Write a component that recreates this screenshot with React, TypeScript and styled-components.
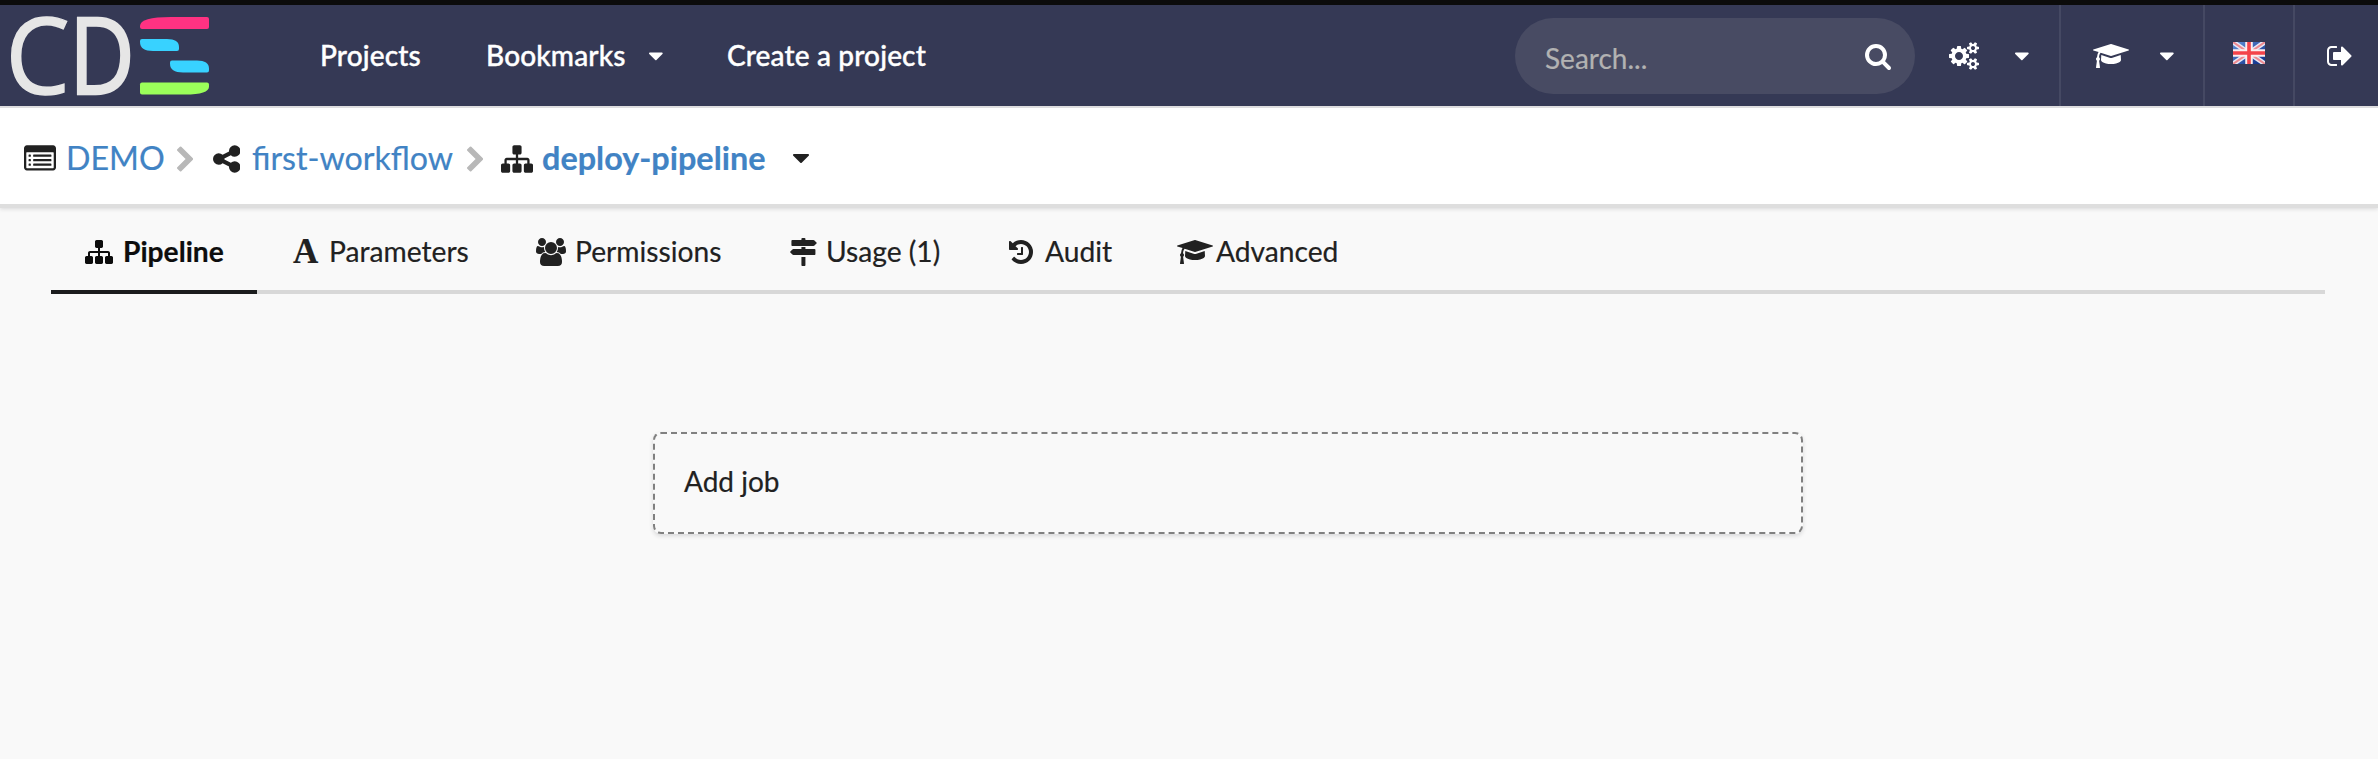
import React from "react";
import styled, { createGlobalStyle } from "styled-components";

const GlobalStyle = createGlobalStyle`
  * { box-sizing: border-box; }
  html, body { margin: 0; padding: 0; }
  body {
    background: #f9f9f9;
    color: #212121;
    font-family: Lato, "Liberation Sans", sans-serif;
    font-size: 28px;
  }
`;

const icons = {
  caret: { box: "0 0 1024 1792", d: "M1024 704q0 26-19 45l-448 448q-19 19-45 19t-45-19l-448-448q-19-19-19-45t19-45 45-19h896q26 0 45 19t19 45z" },
  search: { box: "64 0 1664 1792", d: "M1216 832q0-185-131.5-316.5t-316.5-131.5-316.5 131.5-131.5 316.5 131.5 316.5 316.5 131.5 316.5-131.5 131.5-316.5zm512 832q0 52-38 90t-90 38q-54 0-90-38l-343-342q-179 124-399 124-143 0-273.5-55.5t-225-150-150-225-55.5-273.5 55.5-273.5 150-225 225-150 273.5-55.5 273.5 55.5 225 150 150 225 55.5 273.5q0 220-124 399l343 343q37 37 37 90z" },
  share: { box: "128 0 1536 1792", d: "M1344 1024q133 0 226.5 93.5t93.5 226.5-93.5 226.5-226.5 93.5-226.5-93.5-93.5-226.5q0-12 2-34l-360-180q-92 86-218 86-133 0-226.5-93.5t-93.5-226.5 93.5-226.5 226.5-93.5q126 0 218 86l360-180q-2-22-2-34 0-133 93.5-226.5t226.5-93.5 226.5 93.5 93.5 226.5-93.5 226.5-226.5 93.5q-126 0-218-86l-360 180q2 22 2 34t-2 34l360 180q92-86 218-86z" },
  chevron: { box: "346 0 1037 1792", d: "M1363 877l-742 742q-19 19-45 19t-45-19l-166-166q-19-19-19-45t19-45l531-531-531-531q-19-19-19-45t19-45l166-166q19-19 45-19t45 19l742 742q19 19 19 45t-19 45z" },
  sitemap: { box: "0 0 1792 1792", d: "M1792 1248v320q0 40-28 68t-68 28h-320q-40 0-68-28t-28-68v-320q0-40 28-68t68-28h96v-192h-512v192h96q40 0 68 28t28 68v320q0 40-28 68t-68 28h-320q-40 0-68-28t-28-68v-320q0-40 28-68t68-28h96v-192h-512v192h96q40 0 68 28t28 68v320q0 40-28 68t-68 28h-320q-40 0-68-28t-28-68v-320q0-40 28-68t68-28h96v-192q0-52 38-90t90-38h512v-192h-96q-40 0-68-28t-28-68v-320q0-40 28-68t68-28h320q40 0 68 28t28 68v320q0 40-28 68t-68 28h-96v192h512q52 0 90 38t38 90v192h96q40 0 68 28t28 68z" },
  list: { box: "0 0 1792 1792", d: "M160 128h1472q66 0 113 47t47 113v1088q0 66-47 113t-113 47h-1472q-66 0-113-47t-47-113v-1088q0-66 47-113t113-47zm0 384q-32 0-32 32v832q0 32 32 32h1472q32 0 32-32v-832q0-32-32-32zM288 640h64q32 0 32 32v64q0 32-32 32h-64q-32 0-32-32v-64q0-32 32-32zm0 256h64q32 0 32 32v64q0 32-32 32h-64q-32 0-32-32v-64q0-32 32-32zm0 256h64q32 0 32 32v64q0 32-32 32h-64q-32 0-32-32v-64q0-32 32-32zM544 640h960q32 0 32 32v64q0 32-32 32h-960q-32 0-32-32v-64q0-32 32-32zm0 256h960q32 0 32 32v64q0 32-32 32h-960q-32 0-32-32v-64q0-32 32-32zm0 256h960q32 0 32 32v64q0 32-32 32h-960q-32 0-32-32v-64q0-32 32-32z" },
  history: { box: "128 0 1536 1792", d: "M1664 896q0 156-61 298t-164 245-245 164-298 61q-172 0-327-72.5t-264-204.5q-7-10-6.5-22.5t8.5-20.5l137-138q10-9 25-9 16 2 23 12 73 95 179 147t225 52q104 0 198.5-40.5t163.5-109.5 109.5-163.5 40.5-198.5-40.5-198.5-109.5-163.5-163.5-109.5-198.5-40.5q-98 0-188 35.5t-160 101.5l137 138q31 30 14 69-17 40-59 40h-448q-26 0-45-19t-19-45v-448q0-42 40-59 39-17 69 14l130 129q107-101 244.5-156.5t284.5-55.5q156 0 298 61t245 164 164 245 61 298zm-640-288v448q0 14-9 23t-23 9h-320q-14 0-23-9t-9-23v-64q0-14 9-23t23-9h224v-352q0-14 9-23t23-9h64q14 0 23 9t9 23z" },
  cap: { box: "0 0 2304 1792", d: "M1774 836l18 316q4 69-82 128t-235 93.5-323 34.5-323-34.5-235-93.5-82-128l18-316 574 181q22 7 48 7t48-7zm530-324q0 23-22 31l-1120 352q-4 1-10 1t-10-1l-652-206q-43 34-71 111.5t-34 178.5q63 36 63 109 0 69-58 107l58 433q2 14-8 25-9 11-24 11h-192q-15 0-24-11-10-11-8-25l58-433q-58-38-58-107 0-73 65-111 11-207 98-330l-333-104q-22-8-22-31t22-31l1120-352q4-1 10-1t10 1l1120 352q22 8 22 31z" },
  cogs: { box: "-64 0 1920 1792", d: "M832 896q0-106-75-181t-181-75-181 75-75 181 75 181 181 75 181-75 75-181zm768 512q0-52-38-90t-90-38-90 38-38 90q0 53 37.5 90.5t90.5 37.5 90.5-37.5 37.5-90.5zm0-1024q0-52-38-90t-90-38-90 38-38 90q0 53 37.5 90.5t90.5 37.5 90.5-37.5 37.5-90.5zm-384 421v185q0 10-7 19.5t-16 10.5l-155 24q-11 35-32 76 34 48 90 115 7 11 7 20 0 12-7 19-23 30-82.5 89.5t-78.5 59.5q-11 0-21-7l-115-90q-37 19-77 31-11 108-23 155-7 24-30 24h-186q-11 0-20-7.5t-10-17.5l-23-153q-34-10-75-31l-118 89q-7 7-20 7-11 0-21-8-144-133-144-160 0-9 7-19 10-14 41-53t47-61q-23-44-35-82l-152-24q-10-1-17-9.5t-7-19.5v-185q0-10 7-19.5t16-10.5l155-24q11-35 32-76-34-48-90-115-7-11-7-20 0-12 7-20 22-30 82-89t79-59q11 0 21 7l115 90q34-18 77-32 11-108 23-154 7-24 30-24h186q11 0 20 7.5t10 17.5l23 153q34 10 75 31l118-89q8-7 20-7 11 0 21 8 144 133 144 160 0 8-7 19-12 16-42 54t-45 60q23 48 34 82l152 23q10 2 17 10.5t7 19.5zm640 533v140q0 16-149 31-12 27-30 52 51 113 51 138 0 4-4 7-122 71-124 71-8 0-46-47t-52-68q-20 2-30 2t-30-2q-14 21-52 68t-46 47q-2 0-124-71-4-3-4-7 0-25 51-138-18-25-30-52-149-15-149-31v-140q0-16 149-31 13-29 30-52-51-113-51-138 0-4 4-7 4-2 35-20t59-34 30-16q8 0 46 46.5t52 67.5q20-2 30-2t30 2q51-71 92-112l6-2q4 0 124 70 4 3 4 7 0 25-51 138 17 23 30 52 149 15 149 31zm0-1024v140q0 16-149 31-12 27-30 52 51 113 51 138 0 4-4 7-122 71-124 71-8 0-46-47t-52-68q-20 2-30 2t-30-2q-14 21-52 68t-46 47q-2 0-124-71-4-3-4-7 0-25 51-138-18-25-30-52-149-15-149-31v-140q0-16 149-31 13-29 30-52-51-113-51-138 0-4 4-7 4-2 35-20t59-34 30-16q8 0 46 46.5t52 67.5q20-2 30-2t30 2q51-71 92-112l6-2q4 0 124 70 4 3 4 7 0 25-51 138 17 23 30 52 149 15 149 31z" },
  users: { box: "-64 0 1920 1792", d: "M529 896q-162 5-265 128h-134q-82 0-138-40.5t-56-118.5q0-353 124-353 6 0 43.5 21t97.5 42.5 119 21.5q67 0 133-23-5 37-5 66 0 139 81 256zm1071 637q0 120-73 189.5t-194 69.5h-874q-121 0-194-69.5t-73-189.5q0-53 3.5-103.5t14-109 26.5-108.5 43-97.5 62-81 85.5-53.5 111.5-20q10 0 43 21.5t73 48 107 48 135 21.5 135-21.5 107-48 73-48 43-21.5q61 0 111.5 20t85.5 53.5 62 81 43 97.5 26.5 108.5 14 109 3.5 103.5zm-1024-1277q0 106-75 181t-181 75-181-75-75-181 75-181 181-75 181 75 75 181zm704 384q0 159-112.5 271.5t-271.5 112.5-271.5-112.5-112.5-271.5 112.5-271.5 271.5-112.5 271.5 112.5 112.5 271.5zm576 225q0 78-56 118.5t-138 40.5h-134q-103-123-265-128 81-117 81-256 0-29-5-66 66 23 133 23 59 0 119-21.5t97.5-42.5 43.5-21q124 0 124 353zm-128-609q0 106-75 181t-181 75-181-75-75-181 75-181 181-75 181 75 75 181z" },
  signs: { box: "37 0 1718 1792", d: "M1745 297q10 10 10 23t-10 23l-141 141q-28 28-68 28h-1344q-26 0-45-19t-19-45v-256q0-26 19-45t45-19h576v-64q0-26 19-45t45-19h128q26 0 45 19t19 45v64h512q40 0 68 28zm-977 919h256v512q0 26-19 45t-45 19h-128q-26 0-45-19t-19-45v-512zm832-512q26 0 45 19t19 45v256q0 26-19 45t-45 19h-1344q-40 0-68-28l-141-141q-10-10-10-23t10-23l141-141q28-28 68-28h512v-128h256v128h576z" },
  signOut: { box: "64 0 1568 1792", d: "M704 1440q0 4 1 20t.5 26.5-3 23.5-10 19.5-20.5 6.5h-320q-119 0-203.5-84.5t-84.5-203.5v-704q0-119 84.5-203.5t203.5-84.5h320q13 0 22.5 9.5t9.5 22.5q0 4 1 20t.5 26.5-3 23.5-10 19.5-20.5 6.5h-320q-66 0-113 47t-47 113v704q0 66 47 113t113 47h312l11.5 1 11.5 3 8 5.5 7 9 2 13.5zm928-544q0 26-19 45l-544 544q-19 19-45 19t-45-19-19-45v-288h-448q-26 0-45-19t-19-45v-384q0-26 19-45t45-19h448v-288q0-26 19-45t45-19 45 19l544 544q19 19 19 45z" },
};

const Glyph = styled.svg<{ $size: number }>`
  display: block;
  flex: none;
  height: ${(p) => p.$size}px;
  fill: currentColor;
`;

function Icon({ name, size = 28 }: { name: keyof typeof icons; size?: number }) {
  const { box, d } = icons[name];
  const width = (Number(box.split(" ")[2]) * size) / 1792;
  return (
    <Glyph $size={size} width={width} viewBox={box} aria-hidden="true">
      <path d={d} fillRule={name === "list" ? "evenodd" : "nonzero"} />
    </Glyph>
  );
}

const Page = styled.div`
  min-height: 759px;
  -webkit-text-stroke: 0.2px currentColor;
`;

const Navbar = styled.header`
  display: flex;
  height: 108px;
  border-top: 5px solid #0b0b0b;
  border-bottom: 2px solid #dddddf;
  background: #353955;
  color: #fff;
`;

const Logo = styled.svg`
  flex: none;
  width: 220px;
  height: 101px;
  font-family: "Open Sans", sans-serif;
  -webkit-text-stroke: 0;
`;

const MainNav = styled.nav`
  display: flex;
  flex: 1;
  padding-left: 100px;
`;

const NavLink = styled.a<{ $width: number }>`
  display: flex;
  align-items: center;
  flex: none;
  width: ${(p) => p.$width}px;
  padding-bottom: 1px;
  font-weight: 500;
  letter-spacing: 0.15px;
  white-space: nowrap;
  -webkit-text-stroke: 0.4px currentColor;
`;

const NavText = styled.span<{ $width?: number }>`
  width: ${(p) => (p.$width ? `${p.$width}px` : "auto")};
`;

const NavCaret = styled.span`
  display: flex;
  padding-top: 2px;
`;

const SearchBox = styled.div`
  display: flex;
  align-items: center;
  justify-content: space-between;
  width: 400px;
  height: 76px;
  margin: 13px 0 12px;
  padding: 0 24px 0 30px;
  border-radius: 38px;
  background: #484b63;
`;

const SearchText = styled.span`
  padding-top: 3px;
  color: #b2b2b2;
`;

const NavCell = styled.div<{ $width: number; $left: number; $gap?: number; $divider?: boolean }>`
  display: flex;
  align-items: center;
  gap: ${(p) => p.$gap ?? 0}px;
  width: ${(p) => p.$width}px;
  padding-left: ${(p) => p.$left}px;
  padding-top: 1px;
  border-left: ${(p) => (p.$divider ? "2px solid #454963" : "none")};
`;

const Flag = styled.svg`
  width: 32px;
  height: 22px;
  margin-bottom: 6px;
`;

const Breadcrumb = styled.div`
  display: flex;
  align-items: center;
  height: 96px;
  padding-left: 24px;
  background: #fff;
  box-shadow: 0 4px 0 #dedede, 0 5px 4px rgba(34, 36, 38, 0.15);
  font-size: 32.2px;
`;

const CrumbIcon = styled.span<{ $width: number }>`
  display: flex;
  flex: none;
  width: ${(p) => p.$width}px;
  padding-top: 5px;
`;

const Crumb = styled.a<{ $width: number; $active?: boolean }>`
  flex: none;
  width: ${(p) => p.$width}px;
  padding-top: 3px;
  color: #4183c4;
  font-size: ${(p) => (p.$active ? 32.4 : 32.2)}px;
  font-weight: ${(p) => (p.$active ? 700 : 400)};
  white-space: nowrap;
`;

const Separator = styled.span<{ $width: number }>`
  display: flex;
  flex: none;
  width: ${(p) => p.$width}px;
  padding-top: 7px;
  color: #b8b8b8;
`;

const CrumbCaret = styled.span`
  display: flex;
  padding-top: 4px;
`;

const Tabs = styled.nav`
  display: flex;
  height: 90px;
  margin: 0 53px 0 51px;
  border-bottom: 4px solid #d8d8d8;
  font-size: 28.2px;
`;

const Tab = styled.a<{ $width: number; $left: number; $active?: boolean }>`
  display: flex;
  align-items: center;
  flex: none;
  width: ${(p) => p.$width}px;
  height: 90px;
  padding: 8px 0 0 ${(p) => p.$left}px;
  border-bottom: 4px solid ${(p) => (p.$active ? "#1b1c1d" : "transparent")};
  color: ${(p) => (p.$active ? "#0d0d0d" : "#212121")};
  font-weight: ${(p) => (p.$active ? 700 : 400)};
  white-space: nowrap;
`;

const TabIcon = styled.span<{ $width: number }>`
  display: flex;
  flex: none;
  width: ${(p) => p.$width}px;
  padding-top: 2px;
`;

const FontGlyph = styled.span`
  font: 700 35px/28px "Liberation Serif", serif;
`;

const Workflow = styled.main`
  padding: 138px 0 0 653px;
`;

const JobCard = styled.div`
  display: flex;
  align-items: center;
  width: 1150px;
  height: 102px;
  padding: 0 0 4px 29px;
  border: 2px dashed #808080;
  border-radius: 8px;
  box-shadow: 0 2px 4px rgba(34, 36, 38, 0.15);
`;

export default function App() {
  return (
    <Page>
      <GlobalStyle />
      <Navbar>
        <Logo viewBox="0 5 220 101" aria-label="CDS">
          <g fill="#e6e6e6" stroke="#e6e6e6" fontSize="106">
            <text transform="translate(5.4 94.3) scale(.962 1)" strokeWidth="1.500">C</text>
            <text transform="translate(69.3 93.8) scale(.85 1)" strokeWidth="2.600">D</text>
          </g>
          <path fill="#ff3282" d="M140 26q0-9 31-9h36q2 0 2 2v8q0 2-2 2h-65q-2 0-2-2z" />
          <path fill="#38d2ff" d="M142 39h25q12 0 12 8v2q0 2-2 2h-24q-13 0-13-9v-1q0-2 2-2z" />
          <path fill="#38d2ff" d="M172 60.500h25q12 0 12 8v2q0 2-2 2h-24q-13 0-13-9v-1q0-2 2-2z" />
          <path fill="#9bff5a" d="M142 82.500h65q2 0 2 2v2q0 8-24 8h-43q-2 0-2-2v-8q0-2 2-2z" />
        </Logo>
        <MainNav>
          <NavLink $width={166}>Projects</NavLink>
          <NavLink $width={241}>
            <NavText $width={163}>Bookmarks</NavText>
            <NavCaret><Icon name="caret" size={24} /></NavCaret>
          </NavLink>
          <NavLink $width={200}>Create a project</NavLink>
        </MainNav>
        <SearchBox>
          <SearchText>Search...</SearchText>
          <Icon name="search" />
        </SearchBox>
        <NavCell $width={144} $left={34} $gap={36}>
          <Icon name="cogs" />
          <Icon name="caret" size={24} />
        </NavCell>
        <NavCell $width={144} $left={32} $gap={31} $divider>
          <Icon name="cap" />
          <Icon name="caret" size={24} />
        </NavCell>
        <NavCell $width={90} $left={28} $divider>
          <Flag viewBox="0 0 32 22" aria-label="English">
            <defs>
              <linearGradient id="flagBlue" x1="0" y1="0" x2="1" y2="1">
                <stop offset="0" stopColor="#5f8fd6" />
                <stop offset="1" stopColor="#0a2a86" />
              </linearGradient>
            </defs>
            <rect width="32" height="22" fill="url(#flagBlue)" />
            <path d="M0 0L32 22M32 0L0 22" stroke="#e6e8f5" strokeWidth="5" />
            <path d="M0 0L32 22M32 0L0 22" stroke="#ee8a90" strokeWidth="2" />
            <path d="M16 0v22M0 11h32" stroke="#fbeef0" strokeWidth="7.500" />
            <path d="M16 0v22M0 11h32" stroke="#f4434a" strokeWidth="3.600" />
          </Flag>
        </NavCell>
        <NavCell $width={85} $left={32} $divider>
          <Icon name="signOut" />
        </NavCell>
      </Navbar>
      <Breadcrumb>
        <CrumbIcon $width={42}><Icon name="list" size={32} /></CrumbIcon>
        <Crumb $width={111}>DEMO</Crumb>
        <Separator $width={36}><Icon name="chevron" size={28} /></Separator>
        <CrumbIcon $width={39}><Icon name="share" size={32} /></CrumbIcon>
        <Crumb $width={215}>first-workflow</Crumb>
        <Separator $width={34}><Icon name="chevron" size={28} /></Separator>
        <CrumbIcon $width={41}><Icon name="sitemap" size={32} /></CrumbIcon>
        <Crumb $width={251} $active>deploy-pipeline</Crumb>
        <CrumbCaret><Icon name="caret" size={28} /></CrumbCaret>
      </Breadcrumb>
      <Tabs>
        <Tab $width={206} $left={34} $active>
          <TabIcon $width={38}><Icon name="sitemap" /></TabIcon>Pipeline
        </Tab>
        <Tab $width={245} $left={36}>
          <TabIcon $width={36}><FontGlyph>A</FontGlyph></TabIcon>Parameters
        </Tab>
        <Tab $width={254} $left={34}>
          <TabIcon $width={39}><Icon name="users" /></TabIcon>Permissions
        </Tab>
        <Tab $width={218} $left={34}>
          <TabIcon $width={36}><Icon name="signs" /></TabIcon>Usage (1)
        </Tab>
        <Tab $width={169} $left={35}>
          <TabIcon $width={36}><Icon name="history" /></TabIcon>Audit
        </Tab>
        <Tab $width={200} $left={34}>
          <TabIcon $width={39}><Icon name="cap" /></TabIcon>Advanced
        </Tab>
      </Tabs>
      <Workflow>
        <JobCard>Add job</JobCard>
      </Workflow>
    </Page>
  );
}
